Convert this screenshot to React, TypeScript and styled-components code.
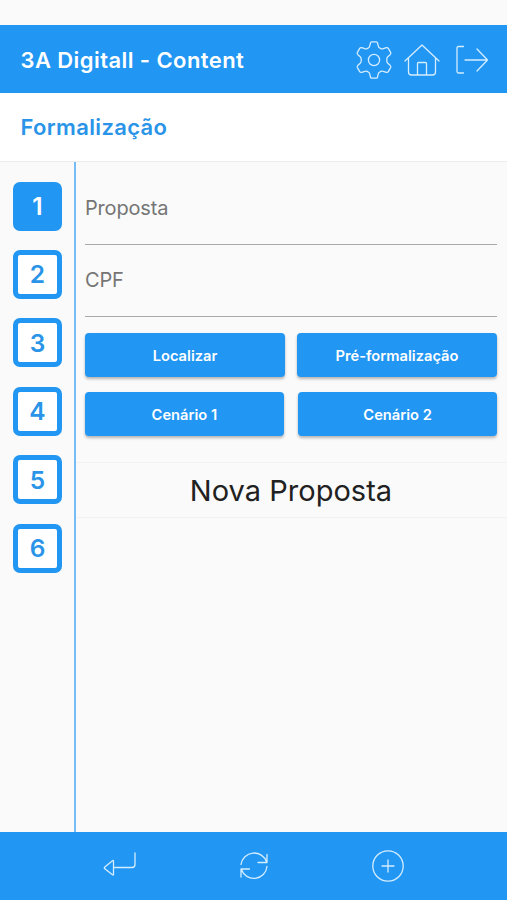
import React, { useState } from 'react';
import styled, { createGlobalStyle } from 'styled-components';

const BLUE = '#2196f3';

const GlobalStyle = createGlobalStyle`
  * { box-sizing: border-box; }
  html, body { margin: 0; background: #fafafa; }
  body, button, input { font-family: Inter, "Liberation Sans", sans-serif; }
`;

const Screen = styled.div`
  display: flex;
  flex-direction: column;
  width: 100%;
  height: 900px;
  padding-top: 25px;
  background: #fafafa;
  overflow: hidden;
`;

const AppBar = styled.header`
  display: flex;
  align-items: center;
  justify-content: space-between;
  flex: none;
  height: 68px;
  padding: 1px 16.5px 0 20.5px;
  background: ${BLUE};
`;

const Title = styled.h1`
  margin: 0;
  font-size: 22px;
  line-height: 28px;
  font-weight: 640;
  letter-spacing: 0.42px;
  white-space: nowrap;
  color: #fff;
`;

const Actions = styled.nav`
  display: flex;
  align-items: center;
  gap: 11px;
`;

const IconButton = styled.button`
  display: flex;
  padding: 0;
  border: 0;
  background: none;
  color: #d4edff;
`;

const Glyph = styled.svg`
  display: block;
  fill: none;
  stroke: currentColor;
  stroke-width: 1.3;
  stroke-linecap: round;
  stroke-linejoin: round;
`;

const SubHeader = styled.div`
  display: flex;
  align-items: center;
  flex: none;
  height: 69px;
  padding-left: 20.5px;
  border-bottom: 1px solid #ececec;
  background: #fff;
`;

const Subtitle = styled(Title).attrs({ as: 'h2' })`
  letter-spacing: 0.34px;
  color: #2a94e8;
`;

const Body = styled.div`
  display: flex;
  flex: 1;
`;

const Steps = styled.aside`
  display: flex;
  flex-direction: column;
  gap: 19.4px;
  width: 76px;
  padding: 19.6px 0 0 13px;
  border-right: 2px solid #76bcf7;
`;

const Step = styled.button<{ $active: boolean }>`
  width: 49px;
  height: 49px;
  padding: 0;
  border: 5px solid ${BLUE};
  border-radius: 7px;
  background: ${(p) => (p.$active ? BLUE : '#fff')};
  color: ${(p) => (p.$active ? '#fff' : '#2a94e8')};
  font-size: 24.5px;
  line-height: 36px;
  font-weight: 640;
`;

const Panel = styled.main`
  flex: 1;
  min-width: 0;
`;

const Form = styled.div`
  padding: 10.5px 10px 0 9px;
`;

const Field = styled.input`
  display: block;
  width: 100%;
  height: 72px;
  padding: 0 0 1px;
  border: 0;
  border-bottom: 1px solid #a9a9a9;
  border-radius: 0;
  outline: 0;
  background: none;
  font-size: 20px;
  letter-spacing: -0.18px;
  &::placeholder { color: #757575; opacity: 1; }
`;

const ButtonRow = styled.div<{ $gap: number; $top: number }>`
  display: flex;
  gap: ${(p) => p.$gap}px;
  margin-top: ${(p) => p.$top}px;
`;

const RaisedButton = styled.button`
  flex: 1 1 0;
  height: 44px;
  padding: 1px 0 0;
  border: 0;
  border-radius: 4px;
  background: ${BLUE};
  box-shadow: 0 2px 3px rgba(0, 0, 0, 0.28);
  color: #fff;
  font-size: 14.7px;
  font-weight: 600;
  white-space: nowrap;
`;

const Banner = styled.div`
  height: 56px;
  margin-top: 26px;
  padding-right: 1px;
  border: solid #f2f2f2;
  border-width: 1px 0;
  font-size: 29px;
  line-height: 55px;
  letter-spacing: 0.03px;
  text-align: center;
  white-space: nowrap;
  color: #212121;
`;

const BottomBar = styled.footer`
  display: flex;
  align-items: center;
  justify-content: space-between;
  flex: none;
  height: 68.5px;
  padding: 0 101px 0 102px;
  background: ${BLUE};
`;

const GearIcon = () => (
  <Glyph width="38" height="40" viewBox="0 0 38 40">
    <circle cx="19" cy="20" r="5.6" />
    <path d="M16.800 1.800h4.400q1.200 0 1.400 1.300l.7 3.100q.3 1.400 1.700 2l.8.4q1.200.6 2.500.1l3-1q1.300-.4 2 .7l2.300 4q.6 1.100-.3 2l-2.500 2.300q-1 .9-1 2.200v2.200q0 1.300 1 2.200l2.500 2.300q.9.900.3 2l-2.300 4q-.7 1.100-2 .7l-3-1q-1.300-.5-2.500.1l-.8.4q-1.400.6-1.700 2l-.7 3.100q-.2 1.300-1.400 1.300h-4.400q-1.200 0-1.400-1.300l-.7-3.100q-.3-1.400-1.700-2l-.8-.4q-1.200-.6-2.500-.1l-3 1q-1.300.4-2-.7l-2.300-4q-.6-1.100.3-2l2.500-2.300q1-.9 1-2.200v-2.200q0-1.300-1-2.200l-2.500-2.300q-.9-.9-.3-2l2.300-4q.7-1.100 2-.7l3 1q1.300.5 2.500-.1l.8-.4q1.400-.6 1.700-2l.7-3.100q.2-1.300 1.400-1.300Z" />
  </Glyph>
);

const HomeIcon = () => (
  <Glyph width="38" height="40" viewBox="0 0 38 40">
    <path d="M1 21 18 5l17 16M4.500 18v14q0 3 3 3h21q3 0 3-3V18M13.500 35V23.500q0-1 1-1h7q1 0 1 1V35" />
  </Glyph>
);

const ExitIcon = () => (
  <Glyph width="38" height="40" viewBox="0 0 38 40">
    <path d="M10.500 6.500h-5Q4 6.500 4 8v23.500Q4 33 5.500 33h5M12 20h22.500M24 9l10.500 11L24 31" />
  </Glyph>
);

const ReturnIcon = () => (
  <Glyph width="36" height="36" viewBox="0 0 36 36">
    <path d="M11.500 13.500v13q0 1-1 .3l-7.700-6q-1-.8 0-1.700l7.700-6.300q1-.8 1 .7ZM11.500 19.500H30q3 0 3-3V5" />
  </Glyph>
);

const RefreshIcon = () => (
  <Glyph width="36" height="36" viewBox="0 0 36 36">
    <path d="M5 16.500a13.200 13.200 0 0 1 25.600-2.500M31 6.500v8h-9M31 18.500a13.200 13.200 0 0 1-25.600 3M5 29v-8h8.500" />
  </Glyph>
);

const AddIcon = () => (
  <Glyph width="36" height="36" viewBox="0 0 36 36">
    <circle cx="18" cy="18" r="15.200" />
    <path d="M18 12v12M12 18h12" />
  </Glyph>
);

export default function App() {
  const [step, setStep] = useState(1);
  return (
    <>
      <GlobalStyle />
      <Screen>
        <AppBar>
          <Title>3A Digitall - Content</Title>
          <Actions>
            <IconButton aria-label="Configurações"><GearIcon /></IconButton>
            <IconButton aria-label="Início"><HomeIcon /></IconButton>
            <IconButton aria-label="Sair"><ExitIcon /></IconButton>
          </Actions>
        </AppBar>
        <SubHeader><Subtitle>Formalização</Subtitle></SubHeader>
        <Body>
          <Steps>
            {[1, 2, 3, 4, 5, 6].map((n) => (
              <Step key={n} $active={n === step} onClick={() => setStep(n)}>{n}</Step>
            ))}
          </Steps>
          <Panel>
            <Form>
              <Field placeholder="Proposta" />
              <Field placeholder="CPF" />
              <ButtonRow $gap={12} $top={16.5}>
                <RaisedButton>Localizar</RaisedButton>
                <RaisedButton>Pré-formalização</RaisedButton>
              </ButtonRow>
              <ButtonRow $gap={14.5} $top={15}>
                <RaisedButton>Cenário 1</RaisedButton>
                <RaisedButton>Cenário 2</RaisedButton>
              </ButtonRow>
            </Form>
            <Banner>Nova Proposta</Banner>
          </Panel>
        </Body>
        <BottomBar>
          <IconButton aria-label="Voltar"><ReturnIcon /></IconButton>
          <IconButton aria-label="Atualizar"><RefreshIcon /></IconButton>
          <IconButton aria-label="Adicionar"><AddIcon /></IconButton>
        </BottomBar>
      </Screen>
    </>
  );
}
